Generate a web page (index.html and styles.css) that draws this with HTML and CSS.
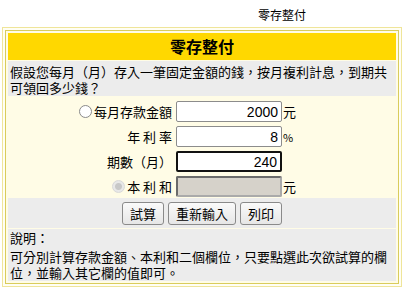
FILE: index.html
```html
<!DOCTYPE html>
<html>
<head>
  <meta charset="utf-8">
  <title>零存整付</title>
  <link rel="stylesheet" href="styles.css">
</head>
<body>
  <div class="page-title">零存整付</div>
  <div class="calc">
    <div class="calc-inner">
      <div class="head">零存整付</div>
      <div class="desc">假設您每月（月）存入一筆固定金額的錢，按月複利計息，到期共可領回多少錢？</div>
      <div class="form">
        <div class="row">
          <label class="label"><span class="radio"></span>每月存款金額</label>
          <input class="field" type="text" value="2000">
          <span class="unit">元</span>
        </div>
        <div class="row">
          <label class="label">年 利 率</label>
          <input class="field" type="text" value="8">
          <span class="unit pct">%</span>
        </div>
        <div class="row">
          <label class="label">期數（月）</label>
          <input class="field focus" type="text" value="240">
          <span class="unit"></span>
        </div>
        <div class="row">
          <label class="label"><span class="radio off"></span>本 利 和</label>
          <input class="field disabled" type="text" value="" disabled>
          <span class="unit">元</span>
        </div>
      </div>
      <div class="buttons">
        <button class="btn">試算</button>
        <button class="btn">重新輸入</button>
        <button class="btn">列印</button>
      </div>
      <div class="note">
        <div class="note-title">說明：</div>
        <div class="note-text">可分別計算存款金額、本利和二個欄位，只要點選此次欲試算的欄位，並輸入其它欄的值即可。</div>
      </div>
    </div>
  </div>
</body>
</html>
```

FILE: styles.css
```css
body {
  margin: 0;
  background: #fff;
  font-family: "Noto Sans CJK TC", "Liberation Sans", sans-serif;
  font-size: 13px;
  color: #000;
}
.page-title {
  height: 27px;
  line-height: 30px;
  padding-left: 258px;
  font-size: 12px;
}
.calc {
  margin-left: 2px;
  width: 394px;
  border: 1px solid #efe59a;
  padding: 2px;
  background: #fffef4;
}
.calc-inner {
  border: 1px solid #d9cc5c;
  background: #fffce6;
  padding: 2px;
  display: flex;
  flex-direction: column;
  gap: 1px;
}
.head {
  background: #ffd800;
  height: 27px;
  line-height: 27px;
  text-align: center;
  font-size: 16px;
  font-weight: bold;
}
.desc {
  background: #ececec;
  padding: 3px 2px 0 2px;
  line-height: 16px;
  height: 32px;
}
.form {
  padding: 4px 0 0 0;
  height: 96px;
  display: flex;
  flex-direction: column;
  gap: 4px;
}
.row {
  display: grid;
  grid-template-columns: 164px 106px 1fr;
  column-gap: 4px;
  align-items: center;
  height: 21px;
}
.label {
  text-align: right;
  display: flex;
  justify-content: flex-end;
  align-items: center;
  gap: 2px;
  font-size: 13px;
  white-space: pre;
}
.radio {
  width: 11px;
  height: 11px;
  border: 1px solid #8a8a8a;
  border-radius: 50%;
  background: #fff;
}
.radio.off {
  border-color: #d8d8d8;
  background: radial-gradient(circle, #c8c8c8 0 3px, #e8e8e8 4px);
}
.field {
  box-sizing: border-box;
  width: 106px;
  height: 21px;
  border: 1px solid #8c8c8c;
  border-radius: 2px;
  background: #fff;
  text-align: right;
  font-family: "Liberation Sans", sans-serif;
  font-size: 14px;
  padding: 0 3px;
  color: #000;
}
.field.focus {
  border: 2px solid #111;
}
.field.disabled {
  background: #d6d2ca;
  border: 2px solid #6a6a6a;
  border-right-color: #aaa;
  border-bottom-color: #aaa;
}
.unit {
  margin-left: -3px;
}
.unit.pct {
  font-size: 11px;
}
.buttons {
  background: #ececec;
  height: 30px;
  display: flex;
  justify-content: center;
  align-items: center;
  gap: 4px;
}
.btn {
  height: 23px;
  padding: 0 7px;
  border: 1px solid #8a8a8a;
  border-radius: 3px;
  background: linear-gradient(#fafafa, #e6e6e6);
  font-family: "Noto Sans CJK TC", sans-serif;
  font-size: 13px;
  color: #000;
}
.note {
  background: #ececec;
  padding: 0 2px;
  height: 52px;
}
.note-title {
  line-height: 17px;
  margin-bottom: 3px;
}
.note-text {
  line-height: 16px;
}
```
